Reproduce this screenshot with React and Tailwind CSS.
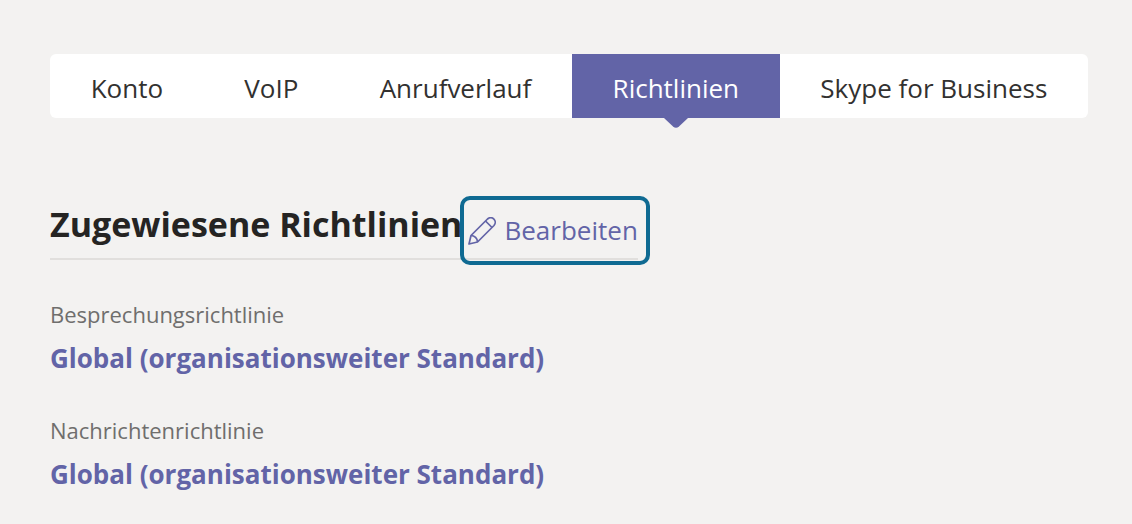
import React from 'react';

const tabs = ['Konto', 'VoIP', 'Anrufverlauf', 'Richtlinien', 'Skype for Business'];

const policies = [
  { label: 'Besprechungsrichtlinie', value: 'Global (organisationsweiter Standard)' },
  { label: 'Nachrichtenrichtlinie', value: 'Global (organisationsweiter Standard)' },
];

const PencilIcon = () => (
  <svg
    className="h-7 w-7 shrink-0"
    viewBox="0 0 28 28"
    fill="none"
    stroke="currentColor"
    strokeWidth="1.7"
    strokeLinejoin="round"
    aria-hidden="true"
  >
    <path d="M1 27 L3 18.5 L19.5 2 C21.5 0.3 24.2 0.5 25.9 2.1 C27.5 3.7 27.7 6.5 26 8.5 L9.5 25 Z" />
    <path d="M3 18.5 C6.5 18.5 9.5 21.5 9.5 25" />
    <path d="M17.5 4 L24 10.5" />
  </svg>
);

const TabBar = ({ active }) => (
  <nav className="flex h-16 rounded-md bg-white text-[26px]">
    {tabs.map((tab) => (
      <button
        key={tab}
        type="button"
        aria-current={tab === active ? 'page' : undefined}
        className={`relative flex-auto whitespace-nowrap pt-1 ${tab === active ? 'bg-[#6264a7] text-white' : 'text-[#323130]'}`}
      >
        {tab}
        {/* Pointer under the active tab */}
        {tab === active && (
          <svg
            className="absolute top-full left-1/2 h-2.5 w-6 -translate-x-1/2 text-[#6264a7]"
            viewBox="0 0 24 10"
            fill="currentColor"
            aria-hidden="true"
          >
            <path d="M0 0 H24 L15 8.5 Q12 11 9 8.5 Z" />
          </svg>
        )}
      </button>
    ))}
  </nav>
);

const App = () => {
  return (
    <div className="min-h-screen bg-[#f3f2f1] pt-[54px] pr-11 pl-[50px] font-['Open_Sans','Noto_Sans',sans-serif]">
      <TabBar active="Richtlinien" />

      <main className="mt-[78px]">
        <div className="flex h-16 w-fit items-start border-b-2 border-[#e1dfdd]">
          <h1 className="pt-1 text-[34px] leading-[48px] font-bold whitespace-nowrap text-[#252423]">
            Zugewiesene Richtlinien
          </h1>
          <button
            type="button"
            className="-mr-3 -ml-0.5 flex h-[69px] items-center gap-2 rounded-[10px] border-4 border-[#0f6a92] pr-2 pl-1 text-[26px] text-[#6264a7]"
          >
            <PencilIcon />
            Bearbeiten
          </button>
        </div>

        <dl className="mt-9 flex flex-col gap-7">
          {policies.map(({ label, value }) => (
            <div key={label}>
              <dt className="text-[22px] leading-9 text-[#6f6e6d]">{label}</dt>
              <dd className="text-[26px] leading-[52px] font-bold">
                <a href="#" className="text-[#6264a7]">{value}</a>
              </dd>
            </div>
          ))}
        </dl>
      </main>
    </div>
  );
};

export default App;
